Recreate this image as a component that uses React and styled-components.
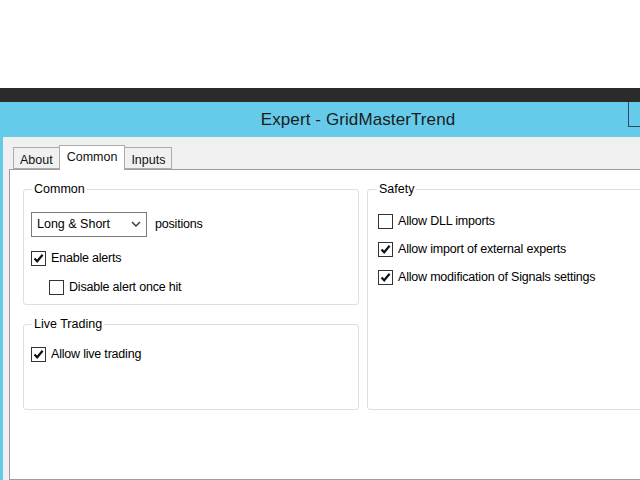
import React from 'react';
import styled, { createGlobalStyle } from 'styled-components';

const Global = createGlobalStyle`
    html, body {
        margin:0;
        padding:0;
        background:#ffffff;
        overflow:hidden;
    }
    body {
        font-family:"Liberation Sans", Arial, sans-serif;
        font-size:12px;
        color:#000;
    }
`;

const Page = styled.div`
    width:640px;
    height:480px;
    padding-top:88px;
    box-sizing:border-box;
    overflow:hidden;
`;
const Frame = styled.div`
    background:#2b2b2b;
    padding-top:14px;
    width:680px;
`;
const Window = styled.div`
    border-left:3px solid #66cbea;
    background:#f0f0f0;
    height:378px;
    display:flex;
    flex-direction:column;
`;
const TitleBar = styled.div`
    position:relative;
    height:35px;
    margin-left:-3px;
    background:#66cbea;
    display:flex;
    align-items:center;
    justify-content:center;
    padding-left:36px;
    box-sizing:border-box;
`;
const Title = styled.div`
    font-size:17px;
    color:#1b1b1b;
    letter-spacing:0.1px;
`;
const CloseBox = styled.div`
    position:absolute;
    left:628px;
    top:0;
    width:60px;
    height:24px;
    border-left:1px solid #2c4c5b;
    border-bottom:1px solid #2c4c5b;
`;
const Body = styled.div`
    flex:1;
    display:flex;
    flex-direction:column;
    padding:8px 0 0 6px;
    min-height:0;
`;
const Tabs = styled.div`
    display:flex;
    align-items:flex-end;
    padding-left:4px;
    height:24px;
    position:relative;
    z-index:1;
`;
const Tab = styled.div`
    box-sizing:border-box;
    height:${p => p.$active ? '25px' : '22px'};
    margin-bottom:${p => p.$active ? '-1px' : '0'};
    padding:${p => p.$active ? '4px 7px 0 7px' : '5px 6px 0 6px'};
    border:1px solid #acacac;
    border-bottom:${p => p.$active ? 'none' : '1px solid #acacac'};
    margin-left:${p => p.$first ? '0' : '-1px'};
    background:${p => p.$active ? '#ffffff' : '#f0f0f0'};
    font-size:12.5px;
    line-height:15px;
    color:#111;
`;
const Panel = styled.div`
    flex:1;
    background:#ffffff;
    border:1px solid #9c9c9c;
    border-right:none;
    padding:12px 0 0 13px;
    display:grid;
    grid-template-columns:336px 1fr;
    grid-template-rows:123px 93px;
    column-gap:8px;
    row-gap:12px;
    align-content:start;
`;
const Group = styled.fieldset`
    margin:0;
    padding:0 0 0 ${p => p.$pad || 7}px;
    border:1px solid #dcdfe3;
    border-radius:3px;
    min-width:0;
    grid-column:${p => p.$col};
    grid-row:${p => p.$row};
    display:flex;
    flex-direction:column;
`;
const Legend = styled.legend`
    padding:0 2px;
    margin-left:${p => p.$shift || 2}px;
    font-size:12.5px;
    line-height:14px;
`;
const Row = styled.div`
    display:flex;
    align-items:center;
    height:28px;
    padding-left:${p => p.$indent ? '18px' : '0'};
`;
const Spacer = styled.div`
    height:${p => p.$h}px;
    flex:none;
`;
const SelectBox = styled.div`
    box-sizing:border-box;
    width:116px;
    height:25px;
    border:1px solid #7a7a7a;
    background:#fff;
    display:flex;
    align-items:center;
    justify-content:space-between;
    padding:0 5px 0 5px;
    font-size:12.5px;
    margin-right:8px;
`;
const Box = styled.div`
    box-sizing:border-box;
    width:15px;
    height:15px;
    border:1px solid #333333;
    background:#fff;
    margin-right:5px;
    display:flex;
    align-items:center;
    justify-content:center;
    flex:none;
`;
const Label = styled.span`
    font-size:12.5px;
    letter-spacing:-0.2px;
    white-space:nowrap;
`;

const Check = ({ on, children, indent }) => (
    <Row $indent={indent}>
        <Box>
            {on && (
                <svg width="11" height="11" viewBox="0 0 11 11">
                    <path d="M1.5 5.5 L4.2 8.3 L9.6 1.8" stroke="#111" strokeWidth="2.2" fill="none" />
                </svg>
            )}
        </Box>
        <Label>{children}</Label>
    </Row>
);

const App = () => {
    return (
        <Page>
            <Global />
            <Frame>
                <Window>
                    <TitleBar>
                        <Title>Expert - GridMasterTrend</Title>
                        <CloseBox />
                    </TitleBar>
                    <Body>
                        <Tabs>
                            <Tab $first>About</Tab>
                            <Tab $active>Common</Tab>
                            <Tab>Inputs</Tab>
                        </Tabs>
                        <Panel>
                            <Group $col="1" $row="1">
                                <Legend $shift={1}>Common</Legend>
                                <Spacer $h={14} />
                                <Row>
                                    <SelectBox>
                                        <span>Long &amp; Short</span>
                                        <svg width="10" height="6" viewBox="0 0 10 6">
                                            <path d="M1 1 L5 5 L9 1" stroke="#333" strokeWidth="1.4" fill="none" />
                                        </svg>
                                    </SelectBox>
                                    <Label>positions</Label>
                                </Row>
                                <Spacer $h={6} />
                                <Check on>Enable alerts</Check>
                                <Spacer $h={1} />
                                <Check indent>Disable alert once hit</Check>
                            </Group>
                            <Group $col="2" $row="1 / span 2" $pad={10}>
                                <Legend $shift={-1}>Safety</Legend>
                                <Spacer $h={11} />
                                <Check>Allow DLL imports</Check>
                                <Check on>Allow import of external experts</Check>
                                <Check on>Allow modification of Signals settings</Check>
                            </Group>
                            <Group $col="1" $row="2">
                                <Legend $shift={1}>Live Trading</Legend>
                                <Spacer $h={9} />
                                <Check on>Allow live trading</Check>
                            </Group>
                        </Panel>
                    </Body>
                </Window>
            </Frame>
        </Page>
    );
};

export default App;
